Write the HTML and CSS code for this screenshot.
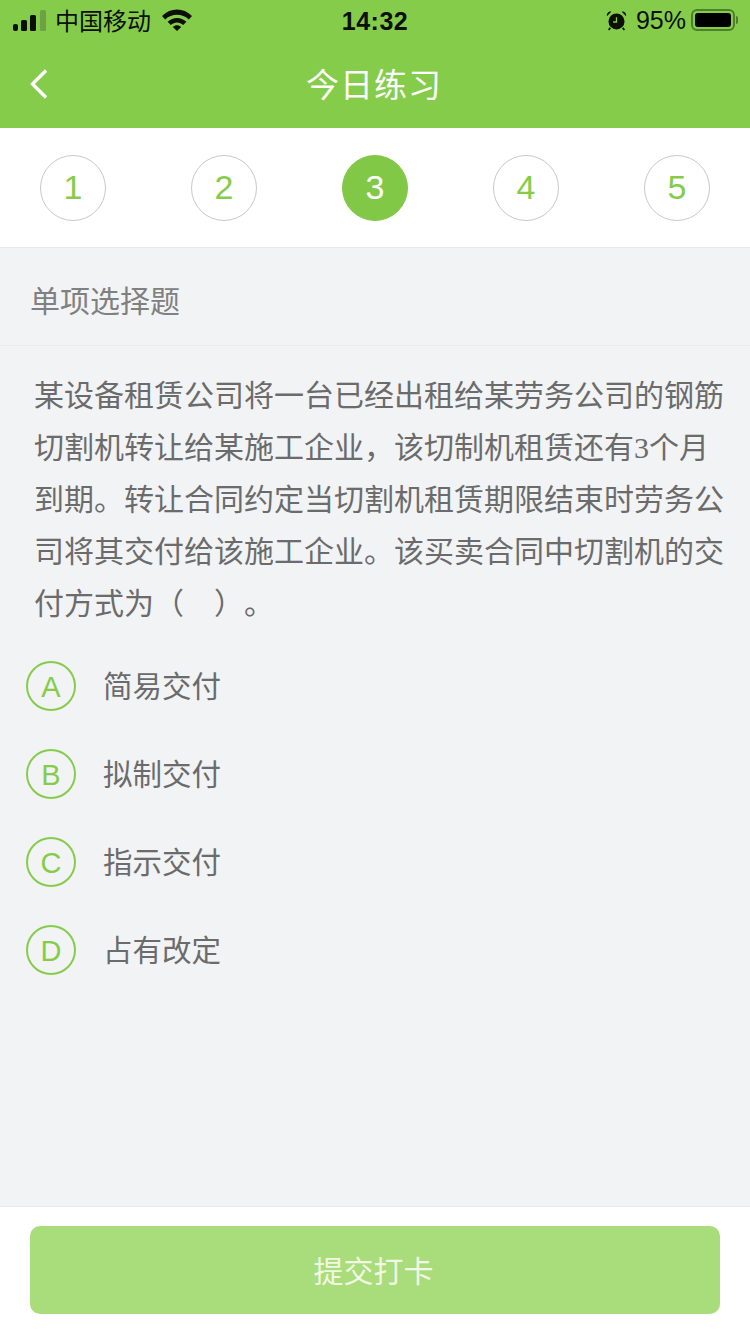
FILE: index.html
```html
<!DOCTYPE html>
<html lang="zh">

<head>
    <meta charset="UTF-8">
    <meta name="viewport" content="width=device-width, initial-scale=1.0">
    <title>今日练习</title>
    <link rel="stylesheet" href="styles.css">
</head>

<body>
    <div class="page">
        <header class="top">
            <div class="status">
                <div class="status-left">
                    <svg class="signal" width="33" height="21" viewBox="0 0 33 21">
                        <rect x="0" y="14" width="5" height="7" rx="2" fill="#0b0f05"/>
                        <rect x="8" y="10" width="6" height="11" rx="1.5" fill="#0b0f05"/>
                        <rect x="17" y="5" width="6" height="16" rx="1.5" fill="#0b0f05"/>
                        <rect x="27" y="0" width="6" height="21" rx="1.5" fill="#6ca246"/>
                    </svg>
                    <span class="carrier">中国移动</span>
                    <svg class="wifi" width="30" height="22" viewBox="0 0 30 22">
                        <path d="M0 7C8.5 -1.6 21.5 -1.6 30 7L26.8 10.4C20.2 4.2 9.8 4.2 3.2 10.4Z" fill="#0b0f05"/>
                        <path d="M5.6 12.8C11 7.6 19 7.6 24.4 12.8L21.2 16C17.6 12.6 12.4 12.6 8.8 16Z" fill="#0b0f05"/>
                        <path d="M10.8 18C13.4 15.6 16.6 15.6 19.2 18L15 22Z" fill="#0b0f05"/>
                    </svg>
                </div>
                <span class="clock">14:32</span>
                <div class="status-right">
                    <svg class="alarm" width="21" height="21" viewBox="0 0 22 22">
                        <circle cx="11" cy="12" r="8.4" fill="#0b0f05"/>
                        <path d="M1 6.5L5.5 1.8C3 1 0.4 3.6 1 6.5ZM21 6.5L16.5 1.8C19 1 21.6 3.6 21 6.5Z" fill="#0b0f05"/>
                        <path d="M4.5 18.5L2.8 21M17.5 18.5L19.2 21" stroke="#0b0f05" stroke-width="1.8"/>
                        <path d="M11 7.5V12.6H7.5" stroke="#86cc4b" stroke-width="1.4" fill="none"/>
                    </svg>
                    <span class="percent">95%</span>
                    <div class="battery"><div class="battery-fill"></div></div>
                    <div class="battery-cap"></div>
                </div>
            </div>
            <div class="nav">
                <svg class="back" width="20" height="32" viewBox="0 0 20 32">
                    <path d="M17 2.5L3.5 16L17 29.5" stroke="#fff" stroke-width="3.4" fill="none"/>
                </svg>
                <h1 class="nav-title">今日练习</h1>
            </div>
        </header>

        <div class="steps">
            <div class="step">1</div>
            <div class="step">2</div>
            <div class="step step-active">3</div>
            <div class="step">4</div>
            <div class="step">5</div>
        </div>

        <main class="content">
            <div class="qtype">单项选择题</div>
            <p class="question">某设备租赁公司将一台已经出租给某劳务公司的钢筋切割机转让给某施工企业，该切制机租赁还有3个月到期。转让合同约定当切割机租赁期限结束时劳务公司将其交付给该施工企业。该买卖合同中切割机的交付方式为（　）。</p>
            <ul class="options">
                <li class="option"><span class="letter">A</span><span class="option-text">简易交付</span></li>
                <li class="option"><span class="letter">B</span><span class="option-text">拟制交付</span></li>
                <li class="option"><span class="letter">C</span><span class="option-text">指示交付</span></li>
                <li class="option"><span class="letter">D</span><span class="option-text">占有改定</span></li>
            </ul>
        </main>

        <footer class="bottom">
            <button class="submit">提交打卡</button>
        </footer>
    </div>
</body>

</html>
```
FILE: styles.css
```css
* {
    box-sizing: border-box;
}

body {
    margin: 0;
    background-color: #f2f3f5;
    font-family: "Liberation Sans", "Noto Sans CJK SC", sans-serif;
}

.page {
    width: 750px;
    height: 1334px;
    display: flex;
    flex-direction: column;
    overflow: hidden;
}

.top {
    height: 128px;
    background-color: #86cc4b;
    flex: none;
}

.status {
    height: 40px;
    padding: 0 12px 0 13px;
    display: flex;
    align-items: center;
    justify-content: space-between;
    position: relative;
    color: #0b0f05;
}

.status-left,
.status-right {
    display: flex;
    align-items: center;
}

.carrier {
    margin-left: 9px;
    padding-bottom: 2px;
    font-size: 24px;
    width: 97px;
    white-space: nowrap;
}

.wifi {
    margin-left: 10px;
}

.clock {
    position: absolute;
    left: 0;
    right: 0;
    padding-top: 2px;
    text-align: center;
    font-size: 25px;
    font-weight: bold;
    letter-spacing: 0.5px;
}

.percent {
    margin-left: 9px;
    padding-top: 1px;
    font-size: 25px;
}

.battery {
    margin-left: 5px;
    width: 44px;
    height: 22px;
    border: 2px solid #4d7f2c;
    border-radius: 6px;
    padding: 2px;
}

.battery-fill {
    width: 100%;
    height: 100%;
    background-color: #000;
    border-radius: 3px;
}

.battery-cap {
    width: 2px;
    height: 8px;
    margin-left: 1px;
    background-color: #4d7f2c;
    border-radius: 0 2px 2px 0;
}

.nav {
    height: 88px;
    display: flex;
    align-items: center;
    justify-content: center;
    position: relative;
}

.back {
    position: absolute;
    left: 29px;
    top: 28px;
}

.nav-title {
    margin: 0 2px 2px 0;
    font-size: 33px;
    font-weight: normal;
    color: #fff;
    letter-spacing: 1px;
}

.steps {
    height: 120px;
    flex: none;
    padding: 27px 40px 0;
    background-color: #fff;
    border-bottom: 1px solid #e8e9eb;
    display: flex;
    justify-content: space-between;
    align-items: flex-start;
}

.step {
    width: 66px;
    height: 66px;
    padding-bottom: 1px;
    border: 1px solid #c9c9c9;
    border-radius: 50%;
    display: flex;
    align-items: center;
    justify-content: center;
    font-size: 34px;
    color: #86cc4b;
}

.step-active {
    background-color: #82c847;
    border-color: #82c847;
    color: #fff;
}

.content {
    flex: 1;
}

.qtype {
    height: 98px;
    padding: 5px 0 0 30px;
    display: flex;
    align-items: center;
    font-size: 30px;
    color: #808080;
    border-bottom: 1px solid #ebecee;
}

.question {
    margin: 24px 20px 0 34px;
    font-family: "Liberation Serif", "Noto Sans CJK SC", serif;
    font-size: 30px;
    line-height: 52px;
    color: #6b6b6b;
    text-spacing-trim: space-all;
}

.options {
    list-style: none;
    margin: 12px 0 0;
    padding: 0 0 0 26px;
}

.option {
    height: 88px;
    display: flex;
    align-items: center;
}

.letter {
    width: 50px;
    height: 50px;
    padding-top: 2px;
    border: 2px solid #86cc4b;
    border-radius: 50%;
    display: flex;
    align-items: center;
    justify-content: center;
    font-size: 29px;
    color: #86cc4b;
}

.option-text {
    margin-left: 27px;
    padding-bottom: 5px;
    font-size: 29.5px;
    color: #6b6b6b;
}

.bottom {
    height: 128px;
    flex: none;
    padding: 19px 30px 0;
    background-color: #fff;
    border-top: 1px solid #e8e9eb;
}

.submit {
    width: 690px;
    height: 88px;
    padding: 0 3px 3px 0;
    border: none;
    border-radius: 10px;
    background-color: #a9dc7a;
    color: #f1f8e4;
    font-family: inherit;
    font-size: 30px;
}
```
